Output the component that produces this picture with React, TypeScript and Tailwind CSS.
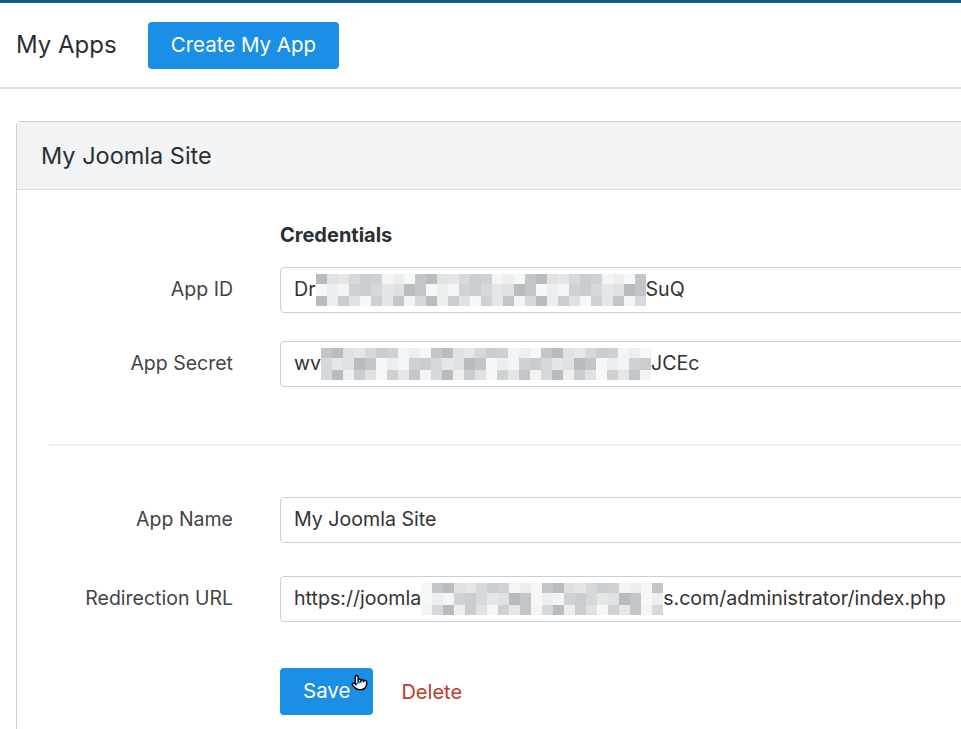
import { Pointer } from 'lucide-react';

const shades = [
  'bg-[#dfe1e3]', 'bg-[#c9cdd0]', 'bg-[#eceeef]', 'bg-[#b7bcc0]', 'bg-[#d6d9dc]',
  'bg-[#f3f4f5]', 'bg-[#c2c6ca]', 'bg-[#e4e6e8]', 'bg-[#cfd2d5]', 'bg-[#f6f7f7]',
];

function Blur({ width, seed }: { width: number; seed: number }) {
  const count = Math.floor(width / 11);
  return (
    <span className="inline-flex h-[34px] flex-col justify-center align-middle">
      <span className="flex h-[10px]">
        {Array.from({ length: count }).map((_, i) => (
          <span key={i} className={`h-full w-[11px] ${shades[(i * 7 + seed * 3) % 10]}`} />
        ))}
      </span>
      <span className="flex h-[12px]">
        {Array.from({ length: count }).map((_, i) => (
          <span key={i} className={`h-full w-[11px] ${shades[(i * 3 + seed * 5 + 4) % 10]}`} />
        ))}
      </span>
      <span className="flex h-[10px]">
        {Array.from({ length: count }).map((_, i) => (
          <span key={i} className={`h-full w-[11px] ${shades[(i * 9 + seed + 2) % 10]}`} />
        ))}
      </span>
    </span>
  );
}

function Field({ label, children, className }: { label: string; children: React.ReactNode; className?: string }) {
  return (
    <div className={`flex items-center ${className ?? ''}`}>
      <div className="w-[216px] text-right text-[19.5px] text-[#444]">{label}</div>
      <div className="ml-[47px] flex h-[46px] flex-1 items-center overflow-hidden whitespace-nowrap rounded-[4px] border border-[#ccd0d4] px-[13px] text-[19.6px] text-[#333]">
        {children}
      </div>
    </div>
  );
}

export default function App() {
  return (
    <div className="h-[729px] overflow-hidden bg-white font-['Inter',sans-serif]">
      <div className="h-[3px] bg-[#1b5a8e]" />
      <div className="flex h-[86px] items-center border-b-2 border-[#dcdfe2] px-[16px]">
        <h1 className="text-[24px] text-[#2a2f33]">My Apps</h1>
        <button className="ml-[31px] h-[47px] rounded-[4px] bg-[#1a8fe5] px-[23px] text-[20.5px] text-white">
          Create My App
        </button>
      </div>

      <div className="ml-[16px] mt-[32px] w-[1200px] rounded-t-[4px] border border-[#c9cfd4]">
        <div className="flex h-[68px] items-center border-b border-[#d5dade] bg-[#f1f3f5] px-[24px]">
          <h2 className="text-[23.5px] text-[#2a2f33]">My Joomla Site</h2>
        </div>
        <div className="pb-[20px] pt-[30px]">
          <div className="ml-[263px] text-[20px] font-bold text-[#2a2f33]">Credentials</div>
          <Field label="App ID" className="mt-[17px]">
            <span>Dr</span>
            <Blur width={332} seed={1} />
            <span>SuQ</span>
          </Field>
          <Field label="App Secret" className="mt-[28px]">
            <span>wv</span>
            <Blur width={330} seed={2} />
            <span>JCEc</span>
          </Field>

          <div className="ml-[32px] mt-[57px] h-[2px] bg-[#eeeeee]" />

          <Field label="App Name" className="mt-[51px]">
            My Joomla Site
          </Field>
          <Field label="Redirection URL" className="mt-[33px]">
            <span>https://joomla</span>
            <Blur width={242} seed={3} />
            <span>s.com/administrator/index.php</span>
          </Field>

          <div className="ml-[263px] mt-[46px] flex items-center">
            <button className="relative h-[47px] rounded-[4px] bg-[#1a8fe5] px-[23px] text-[20.5px] text-white">
              Save
              <Pointer size={17} className="absolute right-[5px] top-[6px] fill-white text-black" strokeWidth={2} />
            </button>
            <button className="ml-[28px] text-[20px] text-[#c0392b]">Delete</button>
          </div>
        </div>
      </div>
    </div>
  );
}
